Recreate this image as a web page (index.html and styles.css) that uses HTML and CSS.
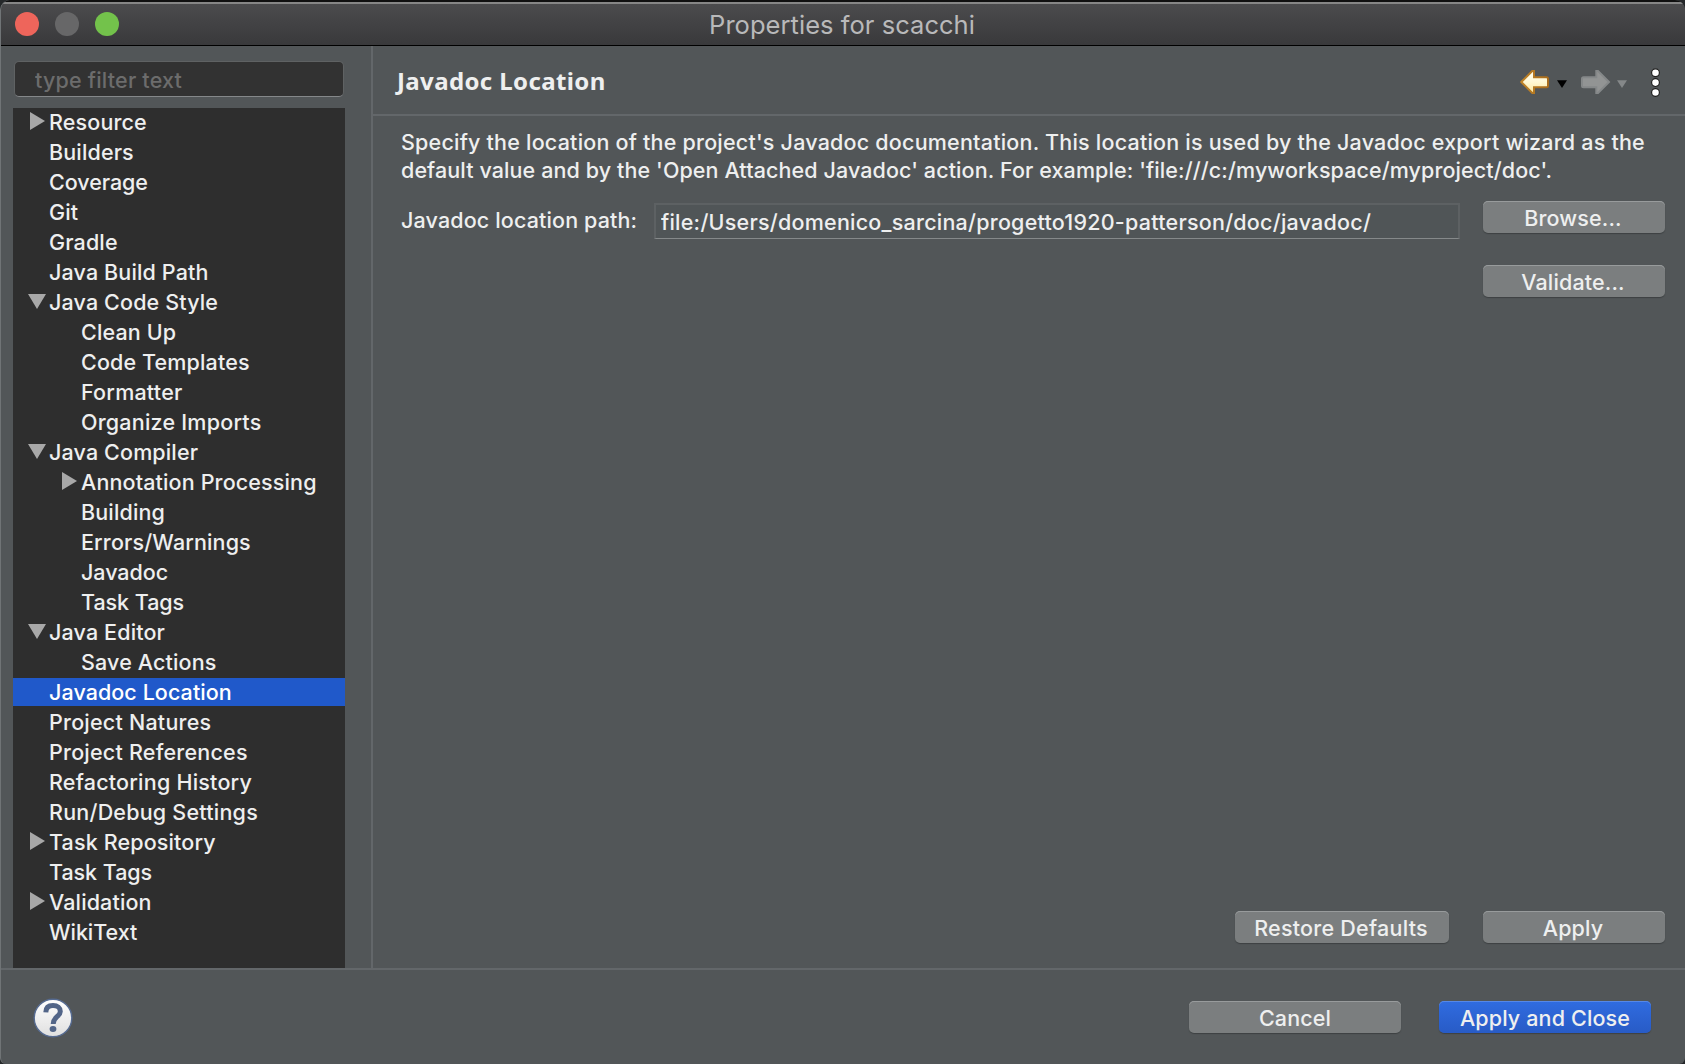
FILE: index.html
```html
<!DOCTYPE html>
<html lang="en">
<head>
<meta charset="utf-8">
<title>Properties for scacchi</title>
<link rel="stylesheet" href="styles.css">
</head>
<body>
<div class="window">
  <header class="titlebar">
    <div class="lights"><span class="light close"></span><span class="light minimize"></span><span class="light zoom"></span></div>
    <h1 class="window-title"><span>Properties for scacchi</span></h1>
  </header>
  <div class="main">
    <aside class="sidebar">
      <input class="filter" type="text" placeholder="type filter text">
      <ul class="tree">
        <li class="row"><i class="arrow closed"></i><span>Resource</span></li>
        <li class="row"><span>Builders</span></li>
        <li class="row tight"><span>Coverage</span></li>
        <li class="row"><span>Git</span></li>
        <li class="row"><span>Gradle</span></li>
        <li class="row"><span>Java Build Path</span></li>
        <li class="row"><i class="arrow open"></i><span>Java Code Style</span></li>
        <li class="row child"><span>Clean Up</span></li>
        <li class="row child"><span>Code Templates</span></li>
        <li class="row child loose"><span>Formatter</span></li>
        <li class="row child loose"><span>Organize Imports</span></li>
        <li class="row"><i class="arrow open"></i><span>Java Compiler</span></li>
        <li class="row child"><i class="arrow closed"></i><span>Annotation Processing</span></li>
        <li class="row child"><span>Building</span></li>
        <li class="row child"><span>Errors/Warnings</span></li>
        <li class="row child tight"><span>Javadoc</span></li>
        <li class="row child tight"><span>Task Tags</span></li>
        <li class="row"><i class="arrow open"></i><span>Java Editor</span></li>
        <li class="row child"><span>Save Actions</span></li>
        <li class="row selected"><span>Javadoc Location</span></li>
        <li class="row loose"><span>Project Natures</span></li>
        <li class="row loose"><span>Project References</span></li>
        <li class="row loose"><span>Refactoring History</span></li>
        <li class="row loose"><span>Run/Debug Settings</span></li>
        <li class="row"><i class="arrow closed"></i><span>Task Repository</span></li>
        <li class="row tight"><span>Task Tags</span></li>
        <li class="row"><i class="arrow closed"></i><span>Validation</span></li>
        <li class="row tight"><span>WikiText</span></li>
      </ul>
    </aside>
    <section class="page">
      <div class="page-head">
        <h2 class="page-title">Javadoc Location</h2>
        <svg class="nav" width="150" height="40" viewBox="0 0 150 40">
          <defs>
            <linearGradient id="gold" x1="0" y1="0" x2="0" y2="1"><stop offset="0" stop-color="#fffef0"/><stop offset=".5" stop-color="#fff8d4"/><stop offset="1" stop-color="#fbe7a0"/></linearGradient>
            <linearGradient id="edge" x1="0" y1="0" x2="1" y2="0"><stop offset="0" stop-color="#c08428"/><stop offset="1" stop-color="#a86c1c"/></linearGradient>
          </defs>
          <path d="M11.300 20L22.300 9H24V15.200H36.500Q38 15.200 38 16.700V23.800Q38 25.300 36.500 25.300H24V31H22.300Z" fill="url(#gold)" stroke="url(#edge)" stroke-width="2"/>
          <path d="M47 18.200H57L52 26Z" fill="#000"/>
          <path d="M99 20L88 9H86.300V15.200H73.500Q72 15.200 72 16.700V23.800Q72 25.300 73.500 25.300H86.300V31H88Z" fill="#929494" stroke="#858889" stroke-width="2"/>
          <path d="M107 18.200H117L112 26Z" fill="#858889"/>
          <g fill="#fff" stroke="#202020" stroke-width="1.200"><circle cx="145.500" cy="10.700" r="3.900"/><circle cx="145.500" cy="20.600" r="3.900"/><circle cx="145.500" cy="30.500" r="3.900"/></g>
        </svg>
      </div>
      <div class="content">
        <p class="description"><span class="line1">Specify the location of the project's Javadoc documentation. This location is used by the Javadoc export wizard as the</span><br><span class="line2">default value and by the 'Open Attached Javadoc' action. For example: 'file:///c:/myworkspace/myproject/doc'.</span></p>
        <div class="form">
          <label class="label" for="path">Javadoc location path:</label>
          <input class="path" id="path" type="text" value="file:/Users/domenico_sarcina/progetto1920-patterson/doc/javadoc/">
          <div class="actions"><button class="button">Browse...</button><button class="button">Validate...</button></div>
        </div>
        <div class="page-buttons"><button class="button wide">Restore Defaults</button><button class="button">Apply</button></div>
      </div>
    </section>
  </div>
  <footer class="footer">
    <svg class="help" width="40" height="40" viewBox="0 0 40 40">
      <defs><linearGradient id="disc" x1="0" y1="0" x2="0" y2="1"><stop offset="0" stop-color="#fff"/><stop offset="1" stop-color="#dfdfdf"/></linearGradient></defs>
      <circle cx="20" cy="20" r="18.800" fill="url(#disc)" stroke="#566b91" stroke-width="1.400"/>
      <path d="M12.800 14.400C12.900 9.700 15.600 7.600 20 7.600C24.600 7.600 27.300 9.900 27.300 13.400C27.300 18.600 20.200 18.500 20.200 26" fill="none" stroke="#526588" stroke-width="5"/>
      <ellipse cx="20" cy="31" rx="3.400" ry="2.900" fill="#526588"/>
    </svg>
    <div class="footer-buttons"><button class="button">Cancel</button><button class="button primary">Apply and Close</button></div>
  </footer>
</div>
</body>
</html>
```
FILE: styles.css
```css
* { box-sizing: border-box; }
body {
  margin: 0;
  background: #25282a;
  color: #eeefef;
  font: 500 21.5px/28px Inter, "Liberation Sans", sans-serif;
  letter-spacing: 0.14px;
}
h1, h2, p, ul { margin: 0; padding: 0; }
input, button { font: inherit; color: inherit; letter-spacing: inherit; }
.window {
  width: 1685px;
  height: 1064px;
  display: flex;
  flex-direction: column;
  background: #525658;
  border-left: 1px solid #707476;
  border-radius: 10px 10px 6px 6px;
  overflow: hidden;
}
.titlebar {
  height: 46px;
  margin-left: -1px;
  border-top: 2px solid #101010;
  border-bottom: 1px solid #000;
  background: linear-gradient(#868686 0 2px, #4b4b4d 2px, #39393b);
  display: grid;
  grid-template-columns: 120px 1fr 120px;
  align-items: center;
  flex: none;
}
.lights { display: flex; gap: 16px; padding: 1px 0 0 15px; }
.light { width: 24px; height: 24px; border-radius: 50%; flex: none; }
.close { background: #ee655b; }
.minimize { background: #676768; }
.zoom { background: #73c24b; }
.window-title {
  padding: 2px 1px 0 0;
  text-align: center;
  font-size: 25.5px;
  font-weight: 400;
  letter-spacing: 0.04px;
  color: #b9b9ba;
}
.main { display: flex; height: 922px; flex: none; }
.sidebar { width: 372px; padding: 15px 0 0 12px; border-right: 2px solid #63676a; }
.filter {
  display: block;
  width: 330px;
  height: 36px;
  margin: 0 0 11px 1px;
  padding: 1px 20px 0;
  border: 1px solid #5f6263;
  border-bottom-color: #85888a;
  border-radius: 5px;
  background: #323232;
  letter-spacing: 0.2px;
  outline: none;
}
.filter::placeholder { color: #6c6c6c; opacity: 1; }
.tree {
  list-style: none;
  width: 332px;
  height: 860px;
  background: #2e2e2e;
  display: flex;
  flex-direction: column;
  gap: 2px;
}
.row { height: 28px; padding-left: 36px; display: flex; flex: none; white-space: nowrap; }
.row.child { padding-left: 68px; }
.row.tight { letter-spacing: -0.05px; }
.row.loose { letter-spacing: 0.22px; }
.selected { background: #2059ca; color: #fff; letter-spacing: 0.07px; }
.arrow { background: #a8a8a8; flex: none; }
.closed { width: 15px; height: 18px; margin: 4px 4px 0 -19px; clip-path: polygon(0 0, 100% 50%, 0 100%); }
.open { width: 18px; height: 15px; margin: 6px 3px 0 -21px; clip-path: polygon(0 0, 100% 0, 50% 100%); }
.page { flex: 1; display: flex; flex-direction: column; min-width: 0; }
.page-head {
  height: 70px;
  border-bottom: 2px solid #63676a;
  padding: 2px 25px 0 24px;
  display: flex;
  justify-content: space-between;
  align-items: flex-start;
}
.page-title {
  padding-top: 16px;
  font: 700 24px/34px "Noto Sans", sans-serif;
  letter-spacing: 0.38px;
}
.nav { margin-top: 14px; flex: none; }
.content { flex: 1; padding: 12px 20px 25px 28px; display: flex; flex-direction: column; }
.description { white-space: nowrap; }
.line1 { letter-spacing: 0.21px; }
.line2 { letter-spacing: 0.1px; }
.form { display: flex; align-items: flex-start; margin-top: 17px; }
.label { width: 253px; padding-top: 5px; white-space: nowrap; }
.path {
  width: 806px;
  height: 36px;
  margin: 2px 23px 0 0;
  padding: 1px 5px 0;
  background: #505557;
  border: 2px solid #5d6163;
  border-width: 2px 2px 1px;
  border-bottom-color: #85898a;
  letter-spacing: 0.235px;
  outline: none;
}
.actions { display: flex; flex-direction: column; gap: 32px; }
.button {
  width: 182px;
  height: 32px;
  padding: 2px 2px 0 0;
  border: 0;
  border-radius: 5px;
  background: #7b7e7f;
  box-shadow: inset 0 1px #989b9c, 0 1px 1px #3e4143;
  line-height: 30px;
  white-space: nowrap;
}
.button.wide { width: 214px; letter-spacing: 0.25px; }
.page-buttons { margin-top: auto; display: flex; justify-content: flex-end; gap: 34px; }
.footer {
  height: 96px;
  border-top: 2px solid #63676a;
  padding: 0 34px 0 32px;
  display: flex;
  justify-content: space-between;
  align-items: flex-start;
}
.help { margin-top: 28px; }
.footer-buttons { display: flex; gap: 38px; padding-top: 31px; }
.footer-buttons .button { width: 212px; padding-right: 0; }
.footer-buttons .primary {
  background: linear-gradient(#306ce0, #285bc6);
  box-shadow: inset 0 1px #5688e7, 0 1px 1px #3e4143;
}
```
